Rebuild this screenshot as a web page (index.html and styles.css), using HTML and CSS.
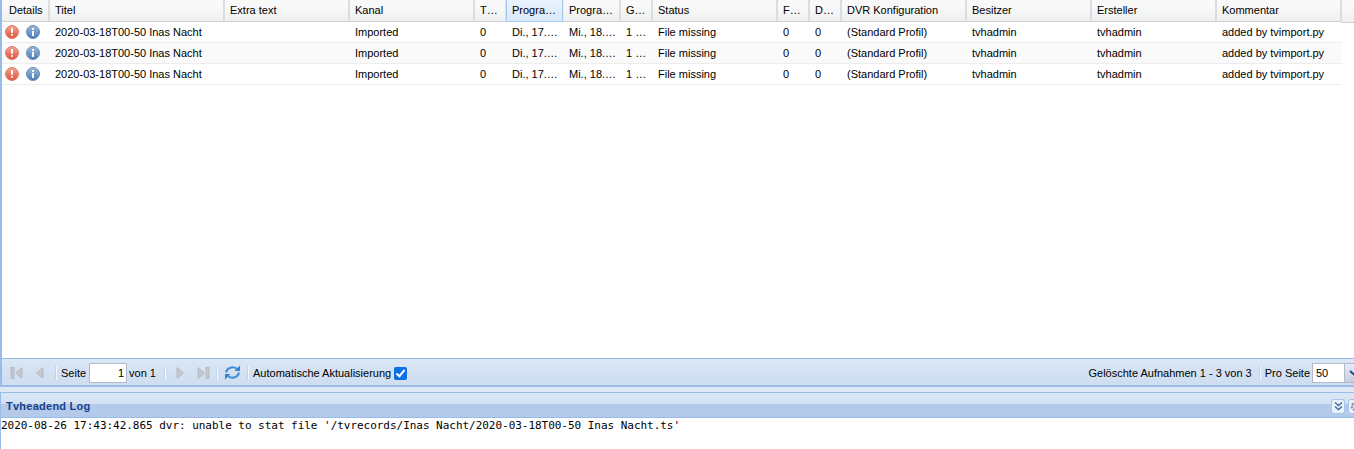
FILE: index.html
```html
<!DOCTYPE html>
<html lang="de">
<head>
<meta charset="utf-8">
<title>Gelöschte Aufnahmen</title>
<link rel="stylesheet" href="styles.css">
</head>
<body>
<svg class="defs" width="0" height="0" aria-hidden="true">
  <defs>
    <linearGradient id="gr" x1="0" y1="0" x2="0" y2="1"><stop offset="0" stop-color="#f4a593"/><stop offset="1" stop-color="#e0503c"/></linearGradient>
    <linearGradient id="gb" x1="0" y1="0" x2="0" y2="1"><stop offset="0" stop-color="#9dbbdc"/><stop offset="1" stop-color="#4a7cb5"/></linearGradient>
    <symbol id="err" viewBox="0 0 14 14"><circle cx="7" cy="7" r="6.500" fill="url(#gr)" stroke="#d9826f"/><rect x="6" y="3" width="2" height="5" rx=".8" fill="#fff"/><rect x="6" y="9" width="2" height="2" rx=".8" fill="#fff"/></symbol>
    <symbol id="inf" viewBox="0 0 14 14"><circle cx="7" cy="7" r="6.500" fill="url(#gb)" stroke="#6b8fb8"/><rect x="6" y="3" width="2" height="2" fill="#fff"/><rect x="6" y="6" width="2" height="5" fill="#fff"/></symbol>
  </defs>
</svg>
<div class="app">
  <main class="grid-panel">
    <div class="grid-scroll">
      <table class="grid">
        <colgroup>
          <col class="c48"><col class="c175"><col class="c125"><col class="c125"><col class="c32"><col class="c57"><col class="c57"><col class="c32"><col class="c125"><col class="c32"><col class="c32"><col class="c125"><col class="c125"><col class="c125"><col class="c125">
        </colgroup>
        <thead>
          <tr>
            <th>Details</th><th>Titel</th><th>Extra text</th><th>Kanal</th><th>T…</th><th class="sorted">Progra…</th><th>Progra…</th><th>G…</th><th>Status</th><th>F…</th><th>D…</th><th>DVR Konfiguration</th><th>Besitzer</th><th>Ersteller</th><th>Kommentar</th>
          </tr>
        </thead>
        <tbody>
          <tr>
            <td class="icons"><svg class="ic"><use href="#err"/></svg><svg class="ic"><use href="#inf"/></svg></td><td>2020-03-18T00-50 Inas Nacht</td><td></td><td>Imported</td><td>0</td><td>Di., 17.…</td><td>Mi., 18.…</td><td>1 …</td><td>File missing</td><td>0</td><td>0</td><td>(Standard Profil)</td><td>tvhadmin</td><td>tvhadmin</td><td>added by tvimport.py</td>
          </tr>
          <tr class="alt">
            <td class="icons"><svg class="ic"><use href="#err"/></svg><svg class="ic"><use href="#inf"/></svg></td><td>2020-03-18T00-50 Inas Nacht</td><td></td><td>Imported</td><td>0</td><td>Di., 17.…</td><td>Mi., 18.…</td><td>1 …</td><td>File missing</td><td>0</td><td>0</td><td>(Standard Profil)</td><td>tvhadmin</td><td>tvhadmin</td><td>added by tvimport.py</td>
          </tr>
          <tr>
            <td class="icons"><svg class="ic"><use href="#err"/></svg><svg class="ic"><use href="#inf"/></svg></td><td>2020-03-18T00-50 Inas Nacht</td><td></td><td>Imported</td><td>0</td><td>Di., 17.…</td><td>Mi., 18.…</td><td>1 …</td><td>File missing</td><td>0</td><td>0</td><td>(Standard Profil)</td><td>tvhadmin</td><td>tvhadmin</td><td>added by tvimport.py</td>
          </tr>
        </tbody>
      </table>
    </div>
    <div class="toolbar">
      <svg class="tb-ic" viewBox="0 0 16 16"><rect x="2" y="2.500" width="3" height="11" fill="#c4c8cc" stroke="#a9adb1" stroke-width=".6"/><path d="M13 2.500v11L6.500 8z" fill="#c4c8cc" stroke="#a9adb1" stroke-width=".6"/></svg>
      <svg class="tb-ic" viewBox="0 0 16 16"><path d="M11 2.500v11L4.500 8z" fill="#c4c8cc" stroke="#a9adb1" stroke-width=".6"/></svg>
      <span class="sep"></span>
      <span class="tb-text">Seite</span>
      <input class="page" value="1" aria-label="Seite">
      <span class="tb-text von">von 1</span>
      <span class="sep"></span>
      <svg class="tb-ic next" viewBox="0 0 16 16"><path d="M5 2.500v11L11.500 8z" fill="#c4c8cc" stroke="#a9adb1" stroke-width=".6"/></svg>
      <svg class="tb-ic end" viewBox="0 0 16 16"><path d="M3 2.500v11L9.500 8z" fill="#c4c8cc" stroke="#a9adb1" stroke-width=".6"/><rect x="11" y="2.500" width="3" height="11" fill="#c4c8cc" stroke="#a9adb1" stroke-width=".6"/></svg>
      <span class="sep"></span>
      <svg class="tb-ic refresh" viewBox="0 0 16 16"><path d="M2 8a6 5.500 0 0 1 10-3.500" fill="none" stroke="#3f8fdc" stroke-width="2"/><path d="M15 1.500v5h-5z" fill="#2f7fd0"/><path d="M14 8a6 5.500 0 0 1-10 3.500" fill="none" stroke="#3f8fdc" stroke-width="2"/><path d="M1 14.500v-5h5z" fill="#2f7fd0"/></svg>
      <span class="sep"></span>
      <span class="tb-text">Automatische Aktualisierung</span>
      <input class="auto" type="checkbox" checked aria-label="Automatische Aktualisierung">
      <span class="fill"></span>
      <span class="tb-text count">Gelöschte Aufnahmen 1 - 3 von 3</span>
      <span class="sep"></span>
      <span class="tb-text">Pro Seite</span>
      <div class="combo"><span class="combo-val">50</span><span class="combo-btn"><svg viewBox="0 0 10 6" width="10" height="6"><path d="M1 1l4 3.500L9 1" fill="none" stroke="#15428b" stroke-width="1.800"/></svg></span></div>
    </div>
  </main>
  <section class="log">
    <header class="log-head">
      <span class="log-title">Tvheadend Log</span>
      <span class="tool"><svg viewBox="0 0 11 11" width="11" height="11"><path d="M2 1.500l3.500 3L9 1.500M2 5.500l3.500 3L9 5.500" fill="none" stroke="#3a6ea8" stroke-width="1.400"/></svg></span>
      <span class="tool gear"><svg viewBox="0 0 11 11" width="11" height="11"><circle cx="5.500" cy="5.500" r="3.500" fill="none" stroke="#7d93b8" stroke-width="2.400" stroke-dasharray="2 1"/></svg></span>
    </header>
    <pre class="log-body">2020-08-26 17:43:42.865 dvr: unable to stat file '/tvrecords/Inas Nacht/2020-03-18T00-50 Inas Nacht.ts'</pre>
  </section>
</div>
</body>
</html>
```
FILE: styles.css
```css
* { box-sizing: border-box; }
html, body { margin: 0; height: 100%; overflow: hidden; background: #fff; }
body { font: 11px "Liberation Sans", Arial, sans-serif; color: #000; }
.defs { position: absolute; }
.app { height: 449px; width: 1354px; display: flex; flex-direction: column; background: #dfe8f6; }

.grid-panel { height: 387px; display: flex; flex-direction: column; border-left: 2px solid #99bbe8; background: #fff; }
.grid-scroll { flex: 1; min-height: 0; overflow: hidden; position: relative; background: #fff; }
.grid-scroll::before { content: ""; position: absolute; left: 1340px; right: 0; top: 0; height: 22px; background: linear-gradient(#f9f9f9 0, #f9f9f9 6px, #eff0f1 100%); border-bottom: 1px solid #d0d0d0; }

.grid { border-collapse: separate; border-spacing: 0; table-layout: fixed; width: 1340px; }
.c48 { width: 48px; } .c175 { width: 175px; } .c125 { width: 125px; } .c32 { width: 32px; } .c57 { width: 57px; }

.grid th {
  height: 22px; padding: 0 4px 1px 5px; font-weight: normal; text-align: left; color: #000;
  background: linear-gradient(#f9f9f9 0, #f9f9f9 6px, #eff0f1 100%);
  border-bottom: 1px solid #d0d0d0; border-right: 2px solid #dcdddf; white-space: nowrap; overflow: hidden;
}
.grid th:first-child { padding-left: 7px; padding-right: 0; }
.grid th.sorted {
  background: linear-gradient(#ebf3fd, #d9e8fb); border-right: 0; border-bottom-color: #a9c8f0;
  box-shadow: -1px 0 #a9c8f0, inset -1px 0 #e9ebee, inset -2px 0 #a9c8f0;
}
.grid td {
  height: 21px; padding: 0 4px 1px 5px; color: #000; border-bottom: 1px solid #ededed; white-space: nowrap; overflow: hidden;
  background: #fff;
}
.grid tr.alt td { background: #fafafa; }
.grid td.icons { padding: 0 0 1px 3px; }
.ic { display: inline-block; width: 14px; height: 14px; margin-right: 7px; vertical-align: middle; }

.toolbar {
  height: 29px; flex: none; display: flex; align-items: center; padding: 1px 0 0 3px;
  background: linear-gradient(#dae7f6 0, #d3e1f2 50%, #cedef0 100%);
  border-top: 1px solid #99bbe8; border-bottom: 2px solid #99bbe8; overflow: hidden;
}
.tb-ic { width: 16px; height: 16px; flex: none; margin: 0 3px 0 4px; }
.tb-ic.next { margin-left: 3px; }
.tb-ic.end { margin-right: 1px; }
.tb-ic.refresh { width: 17px; height: 17px; margin: 0 2px 0 3px; }
.sep { width: 2px; height: 14px; margin: 0 3px 0 4px; flex: none; background: #c0d5ee; border-right: 1px solid #f4f8fd; }
.tb-text { color: #000; white-space: nowrap; margin: 0 1px; }
.tb-text.von { margin-right: 4px; margin-left: 0; }
.tb-text.count { margin-right: 3px; }
.page {
  width: 38px; height: 20px; margin: 0 2px; padding: 0 2px; text-align: right; font: 11px "Liberation Sans", Arial, sans-serif;
  border: 1px solid #b5b8c8; background: #fff; color: #000; outline: none;
}
.auto { appearance: none; width: 13px; height: 13px; margin: 2px 0 0 2px; flex: none; border-radius: 2px; background: #0a6fe0; position: relative; }
.auto::after { content: ""; position: absolute; left: 4px; top: 1px; width: 3px; height: 7px; border: solid #fff; border-width: 0 2px 2px 0; transform: rotate(40deg); }
.fill { flex: 1; }
.combo { width: 48px; flex: none; height: 20px; margin: 0 -6px 0 1px; display: flex; border: 1px solid #b5b8c8; background: #fff; }
.combo-val { width: 32px; padding-left: 3px; line-height: 18px; }
.combo-btn { flex: 1; background: linear-gradient(#e6edf6, #c5cfdb); display: flex; align-items: center; padding-left: 4px; border-left: 1px solid #b5b8c8; }

.log { margin-top: 5px; flex: 1; min-height: 0; display: flex; flex-direction: column; border-left: 1px solid #99bbe8; background: #fff; }
.log-head {
  height: 26px; flex: none; display: flex; align-items: center; padding: 0 0 0 5px;
  background: linear-gradient(#dae7f6 0, #d3e1f2 44%, #b4caea 44%, #b4caea 100%);
  border-top: 1px solid #99bbe8; border-bottom: 1px solid #99bbe8; overflow: hidden;
}
.log-title { flex: 1; min-width: 0; font-weight: bold; color: #15428b; font-size: 11px; letter-spacing: .25px; padding-top: 1px; }
.tool { width: 14px; height: 15px; flex: none; margin: 2px 0 0 0; background: #eaf2fb; border: 1px solid #a9c4e8; border-radius: 3px; display: flex; align-items: center; justify-content: center; }
.tool.gear { margin: 2px -8px 0 3px; }
.log-body { margin: 0; padding: 1px 0 0; font: 11px/14px "DejaVu Sans Mono", monospace; letter-spacing: -.03px; color: #000; }
```
